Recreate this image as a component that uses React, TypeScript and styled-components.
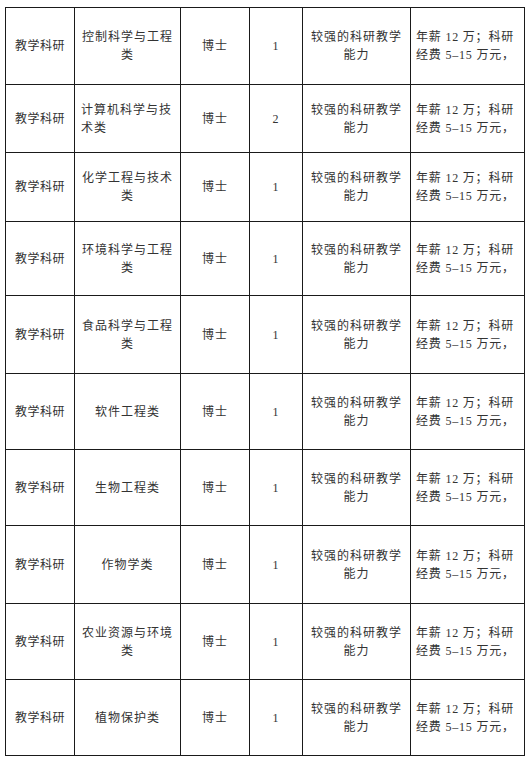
import styled, { createGlobalStyle } from 'styled-components';

const GlobalStyle = createGlobalStyle`
    html, body {
        margin: 0;
        padding: 0;
        background: #fff;
    }
    body {
        font-family: "Liberation Serif", "Noto Sans CJK SC", serif;
        color: #333;
    }
`

const Page = styled.div`
    padding: 7px 0 0 5px;
`

const Grid = styled.div`
    display: grid;
    grid-template-columns: 69px 106px 69px 53px 108px 114px;
    width: 520px;
    box-sizing: border-box;
    border-left: 1px solid #1a1a1a;
    border-top: 1px solid #1a1a1a;
`

const Cell = styled.div<{ $h: number; $align?: string; $pad?: number; $ls?: number }>`
    box-sizing: border-box;
    height: ${p => p.$h}px;
    border-right: 1px solid #1a1a1a;
    border-bottom: 1px solid #1a1a1a;
    display: flex;
    flex-direction: column;
    justify-content: center;
    align-items: ${p => p.$align === 'left' ? 'flex-start' : 'center'};
    padding: 0 ${p => p.$pad ?? 4}px;
    font-size: 12px;
    line-height: 18px;
    letter-spacing: ${p => p.$ls ?? 1}px;
    text-align: ${p => p.$align === 'left' ? 'left' : 'center'};
`

const Line = styled.span`
    display: block;
    white-space: nowrap;
`

const heights = [77, 68, 69, 74, 78, 76, 76, 78, 76, 76];

const rows = [
    { major: ['控制科学与工程', '类'], count: '1' },
    { major: ['计算机科学与技', '术类'], count: '2', left: true },
    { major: ['化学工程与技术', '类'], count: '1' },
    { major: ['环境科学与工程', '类'], count: '1' },
    { major: ['食品科学与工程', '类'], count: '1' },
    { major: ['软件工程类'], count: '1' },
    { major: ['生物工程类'], count: '1' },
    { major: ['作物学类'], count: '1' },
    { major: ['农业资源与环境', '类'], count: '1' },
    { major: ['植物保护类'], count: '1' },
];

export default function App() {
    return (
        <>
            <GlobalStyle />
            <Page>
                <Grid>
                    {rows.map((r, i) => {
                        const h = heights[i];
                        return [
                            <Cell key={`a${i}`} $h={h} $ls={0.5}>教学科研</Cell>,
                            <Cell key={`b${i}`} $h={h} $align={r.left ? 'left' : 'center'} $pad={6}>
                                {r.major.map((m, k) => <Line key={k}>{m}</Line>)}
                            </Cell>,
                            <Cell key={`c${i}`} $h={h}>博士</Cell>,
                            <Cell key={`d${i}`} $h={h}>{r.count}</Cell>,
                            <Cell key={`e${i}`} $h={h}>
                                <Line>较强的科研教学</Line>
                                <Line>能力</Line>
                            </Cell>,
                            <Cell key={`f${i}`} $h={h} $align='left' $pad={5} $ls={0.8}>
                                <Line>年薪 12 万；科研</Line>
                                <Line>经费 5–15 万元，</Line>
                            </Cell>,
                        ];
                    })}
                </Grid>
            </Page>
        </>
    );
}
